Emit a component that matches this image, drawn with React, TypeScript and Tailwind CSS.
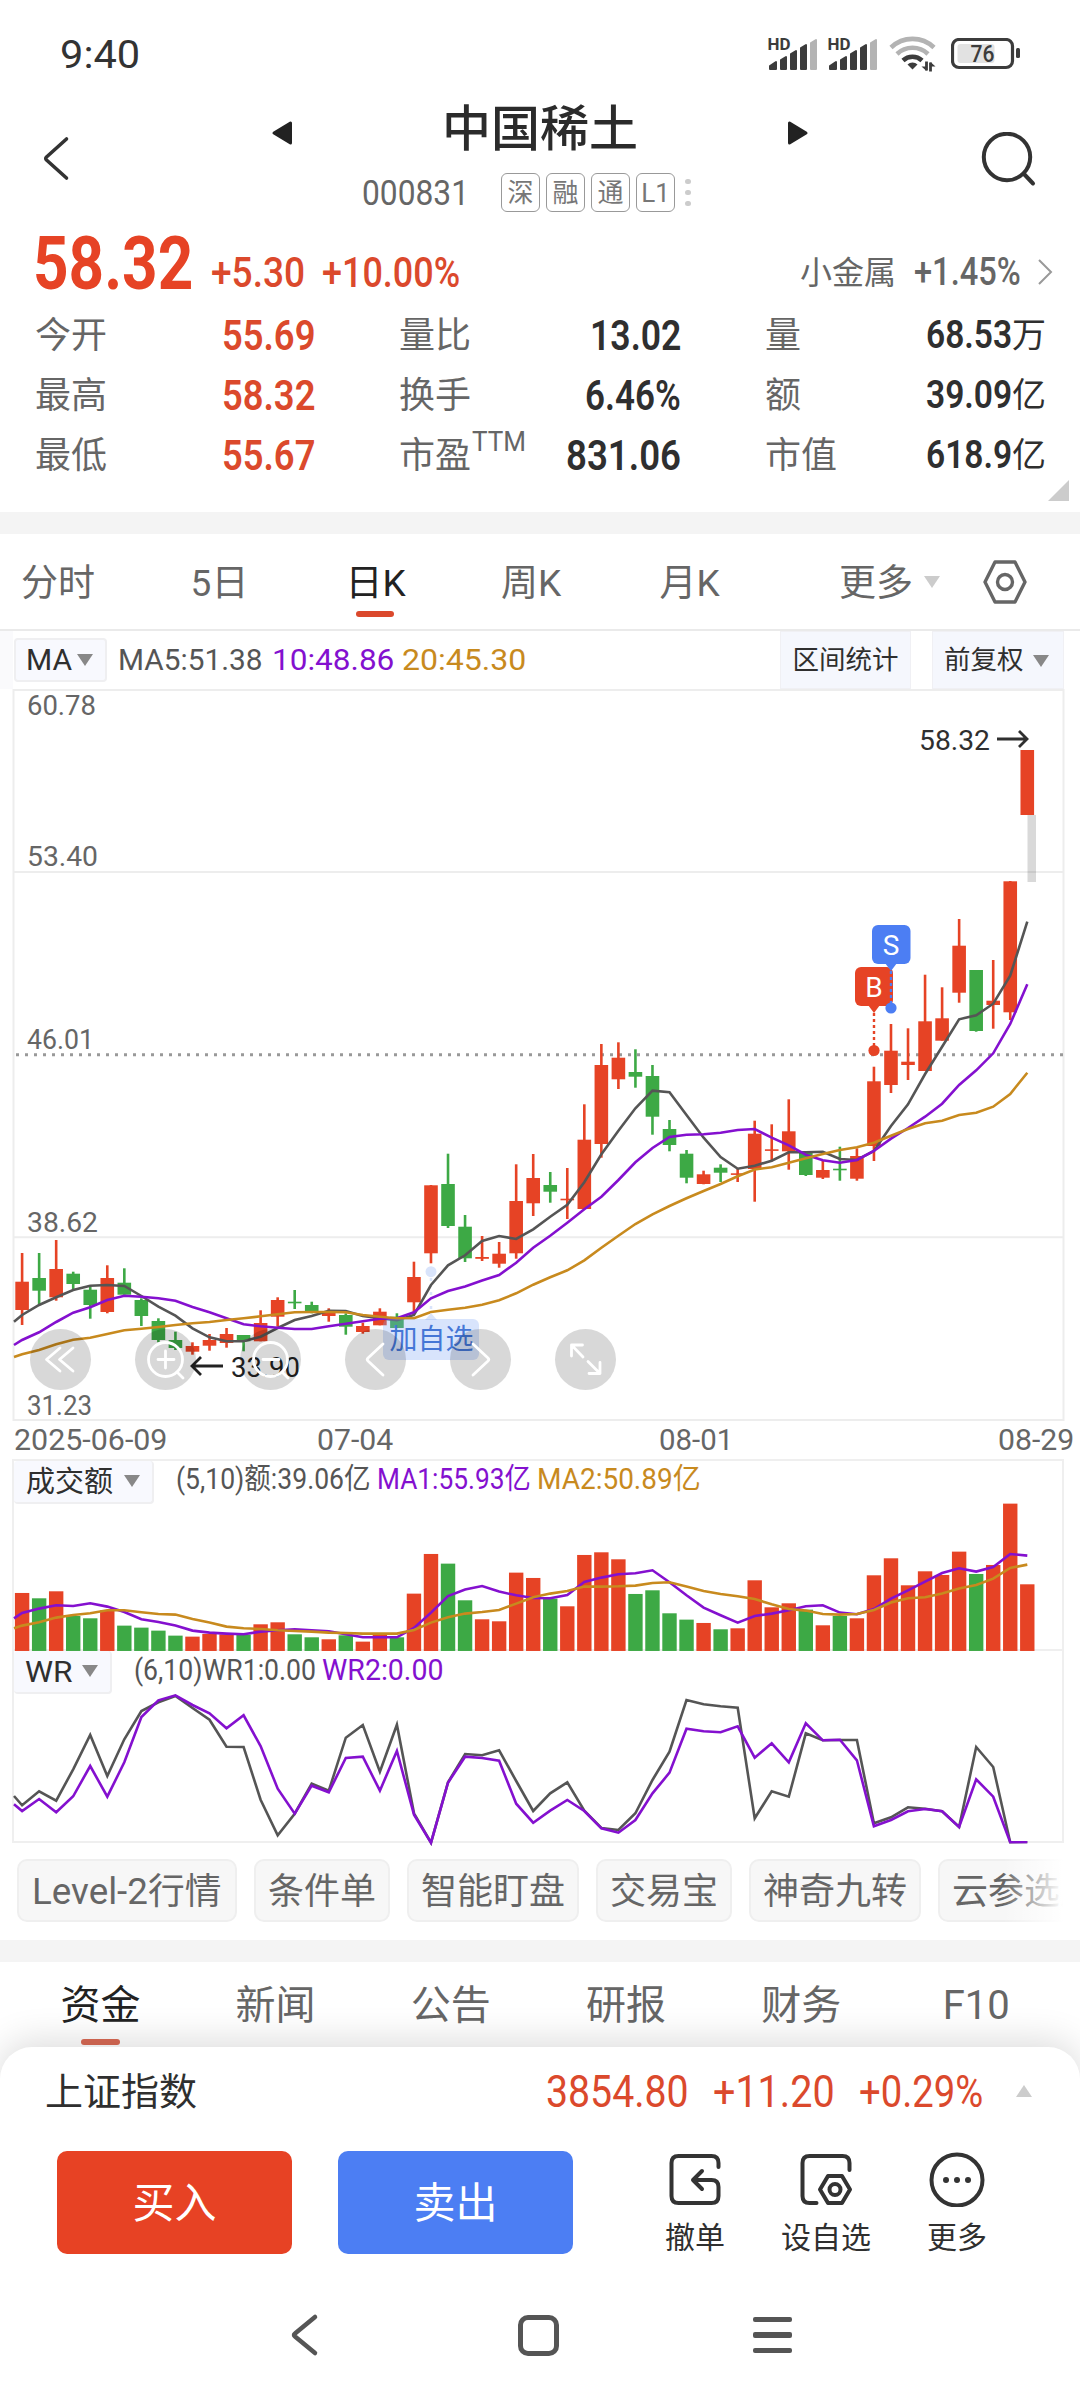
import { useLayoutEffect, useRef, useState, type ReactNode } from 'react'

const RED = '#e64325'
const GREEN = '#3da945'
const GRAY_LINE = '#555555'
const PURPLE = '#8410cf'
const GOLD = '#c88a1e'

const STEP = 17.037
const cx = (i: number) => 22.1 + STEP * i

// [rising, high, body top, body bottom, low]
const candles: [number, number, number, number, number][] = [
  [1, 1253, 1281.7, 1310, 1325], [0, 1253, 1278, 1290.7, 1304], [1, 1240, 1269, 1297.3, 1300.7],
  [0, 1271.7, 1273.7, 1284, 1289.3], [0, 1286.7, 1289.7, 1305, 1318.7], [1, 1265.3, 1278, 1312, 1313.3],
  [0, 1268.3, 1282.7, 1294.7, 1294.7], [0, 1298.3, 1300, 1316, 1326], [0, 1318.3, 1321, 1340, 1342.3],
  [0, 1331.7, 1340, 1348, 1350], [1, 1342.3, 1346, 1351.7, 1354.7], [1, 1334, 1340, 1345.7, 1350.7],
  [1, 1328, 1334, 1343, 1347.7], [0, 1335, 1335, 1341.3, 1351.3], [1, 1310.3, 1323, 1341.3, 1341.3],
  [1, 1297.3, 1300, 1316.7, 1326.7], [0, 1290, 1301.7, 1303.3, 1309], [0, 1301.7, 1305, 1312, 1313.3],
  [1, 1308.3, 1312.7, 1316, 1321.7], [0, 1313.3, 1315, 1326.7, 1334.7], [1, 1322.7, 1326, 1332, 1333.7],
  [1, 1308.3, 1311.7, 1325.3, 1325.3], [0, 1313.3, 1316.7, 1328, 1328], [1, 1261.7, 1277, 1302.3, 1313],
  [1, 1185, 1185.3, 1253.3, 1263.3], [0, 1153.7, 1184, 1226, 1228], [0, 1215, 1226.7, 1258.3, 1262],
  [1, 1236, 1257, 1258.8, 1261], [1, 1242, 1253.7, 1263.7, 1267.7], [1, 1164.3, 1201, 1253.3, 1258.7],
  [1, 1154, 1178, 1203.3, 1216], [0, 1172, 1185, 1191.7, 1202.7], [1, 1168, 1198.7, 1200.3, 1219],
  [1, 1104.3, 1139.7, 1209, 1209], [1, 1044, 1065, 1144, 1157.7], [1, 1042.3, 1057.7, 1079.3, 1089],
  [0, 1049.3, 1072, 1076.7, 1087.7], [0, 1065, 1076, 1116.7, 1134.7], [0, 1120, 1129, 1145, 1151.3],
  [0, 1150, 1153.7, 1177.7, 1183.3], [1, 1170.7, 1174.3, 1184, 1184.3], [0, 1164.3, 1167.7, 1172.7, 1182],
  [1, 1168.3, 1173.3, 1174.9, 1182], [1, 1120.7, 1133.7, 1169, 1201.7], [1, 1124.3, 1149.3, 1150.9, 1161.3],
  [1, 1099.3, 1131.3, 1151.3, 1169.7], [0, 1151, 1153, 1175, 1176], [1, 1160, 1170, 1177.7, 1179],
  [0, 1146.7, 1168.7, 1170.3, 1180.7], [1, 1148.3, 1156, 1178.7, 1180.7], [1, 1066.7, 1081.3, 1146, 1161],
  [1, 1024, 1050.7, 1085, 1093], [1, 1028.3, 1061.7, 1065, 1080], [1, 974.7, 1021.3, 1071, 1071],
  [1, 987.3, 1018.3, 1040.7, 1040.7], [1, 919, 945.7, 992.7, 1002.7], [0, 970, 970, 1031, 1031.7],
  [1, 960, 1000.7, 1005, 1028.7], [1, 881, 881.3, 1012.3, 1020], [1, 750, 750, 815, 815],
]

// every moving average starts with its value on the left frame line
const ma5 = [1321.7, 1315, 1305, 1297.3, 1290, 1285.7, 1285, 1286, 1296, 1306.7, 1315.7, 1328.3, 1337.3, 1341.3, 1341.3, 1336.7, 1328, 1320, 1316, 1310.7, 1311, 1316, 1318.3, 1320.3, 1315, 1285, 1265.3, 1255.3, 1241, 1236, 1239, 1229.3, 1216.7, 1204.7, 1182.3, 1154.3, 1130.7, 1108.3, 1090.7, 1092.3, 1115, 1137.7, 1157, 1168.7, 1165.7, 1160.7, 1152.3, 1152.3, 1151.7, 1159, 1160, 1151, 1126, 1104.3, 1074, 1046.7, 1019.3, 1015.3, 1003.7, 975.7, 921.7]
const ma10 = [1345, 1340, 1332.3, 1322, 1312.7, 1307.3, 1300, 1295.7, 1296.7, 1298.3, 1300.7, 1307, 1312.3, 1318.3, 1324.3, 1326.3, 1327.7, 1329, 1329, 1326.3, 1323.7, 1321.3, 1318.7, 1318.3, 1312.3, 1298.3, 1291, 1286.5, 1280.5, 1275, 1262.7, 1247.7, 1235.7, 1222.7, 1209.3, 1196.7, 1180, 1162.3, 1148, 1137, 1134.7, 1134.3, 1132.7, 1130, 1129, 1137.7, 1145.3, 1154.7, 1160.3, 1162.7, 1160, 1151, 1138.7, 1128, 1116.7, 1103.7, 1085, 1070.3, 1053.3, 1024, 984.3]
const ma20 = [1357, 1354.3, 1350, 1344.3, 1339.7, 1337.7, 1334, 1330.3, 1328.7, 1327, 1325, 1323.3, 1322, 1320, 1318.3, 1316.3, 1314.3, 1312.3, 1312, 1312, 1312.3, 1315, 1316.7, 1318.3, 1318.3, 1312, 1309.7, 1307.7, 1304.7, 1300.3, 1293.3, 1284.7, 1277.3, 1270.3, 1260.3, 1247.7, 1235.7, 1224, 1214.3, 1206, 1198.3, 1191, 1184, 1176.3, 1169.5, 1167.3, 1162.7, 1158.3, 1154, 1150, 1147.3, 1142.7, 1135.7, 1129, 1123.3, 1120.7, 1115, 1112.7, 1106.7, 1094, 1072.7]

// volume and WR panels, three units to a pixel
const volume = [518, 534, 513, 587, 594, 570, 616, 622, 631, 646, 649, 641, 642, 643, 612, 606, 642, 651, 657, 645, 664, 642, 651, 520, 401, 430, 540, 597, 603, 457, 473, 535, 558, 404, 396, 417, 521, 510, 579, 598, 608, 627, 624, 480, 561, 549, 568, 615, 587, 594, 465, 414, 495, 453, 464, 394, 461, 434, 250, 492]
const volMa1 = [594, 578, 565, 555, 557, 549, 559, 575, 597, 605, 616, 631, 637, 640, 642, 634, 630, 627, 630, 633, 642, 651, 651, 651, 623, 577, 527, 508, 497, 514, 525, 533, 534, 524, 485, 472, 462, 459, 450, 486, 525, 562, 585, 607, 587, 580, 570, 558, 555, 577, 582, 566, 535, 510, 484, 458, 444, 454, 440, 401, 406]
const volMa2 = [624, 616, 606, 592, 584, 579, 570, 570, 576, 581, 583, 596, 607, 619, 624, 626, 630, 632, 634, 637, 638, 640, 640, 640, 629, 607, 591, 580, 575, 569, 550, 531, 520, 512, 499, 499, 498, 496, 488, 486, 499, 512, 521, 528, 536, 552, 566, 571, 581, 583, 581, 569, 547, 534, 531, 520, 505, 494, 475, 443, 433]
const wr1 = [1128, 1156, 1114, 1142, 1048, 945, 1068, 958, 873, 847, 828, 864, 899, 980, 981, 1139, 1246, 1181, 1091, 1112, 953, 915, 1055, 914, 1180, 1268, 1087, 1002, 1006, 991, 1083, 1173, 1120, 1087, 1172, 1224, 1230, 1180, 1080, 995, 840, 853, 859, 863, 1195, 1114, 1130, 940, 961, 960, 960, 1210, 1192, 1162, 1166, 1174, 1221, 981, 1041, 1267, 1267]
const wr2 = [1153, 1173, 1137, 1177, 1129, 1038, 1130, 1027, 891, 841, 826, 855, 880, 925, 886, 978, 1106, 1181, 1097, 1117, 1014, 1010, 1112, 993, 1184, 1268, 1088, 1010, 1014, 1022, 1151, 1208, 1172, 1140, 1173, 1225, 1238, 1200, 1120, 1058, 926, 934, 937, 919, 1013, 970, 1027, 910, 961, 959, 1021, 1219, 1200, 1174, 1167, 1174, 1221, 1078, 1130, 1267, 1267]

const toPoints = (ys: number[], unit = 1) =>
  ys.map((y, i) => `${i === 0 ? 14 : cx(i - 1).toFixed(1)},${(y / unit).toFixed(1)}`).join(' ')

function Line({ ys, color, unit }: { ys: number[]; color: string; unit?: number }) {
  return <polyline points={toPoints(ys, unit)} fill="none" stroke={color} strokeWidth="2.600" />
}

/* Squeezes a run of text to a fixed width */
function Fit({ w, className = '', children }: { w: number; className?: string; children: ReactNode }) {
  const ref = useRef<HTMLSpanElement>(null)
  const [scale, setScale] = useState(1)

  useLayoutEffect(() => {
    if (ref.current) setScale(w / ref.current.offsetWidth)
  }, [w])

  return (
    <span className={`inline-block shrink-0 whitespace-nowrap leading-none ${className}`} style={{ width: w }}>
      <span ref={ref} className="inline-block origin-left" style={{ transform: `scaleX(${scale})` }}>
        {children}
      </span>
    </span>
  )
}

function Signal() {
  return (
    <svg width="52" height="40" viewBox="0 -4 52 40">
      <text x="0.500" y="14" fontSize="16" fontWeight="700" fill="#3c3c3c" textLength="23" lengthAdjust="spacingAndGlyphs">HD</text>
      <path d="M3 33v-3l6-4v7z M14 33v-9l5-3v12z M24 33v-15l5-3v18z M34 33v-21l5-3v24z" fill="#3c3c3c" stroke="#3c3c3c" strokeWidth="2" strokeLinejoin="round" />
      <path d="M44 33v-26l5-3v29z" fill="#b3b3b3" stroke="#b3b3b3" strokeWidth="2" strokeLinejoin="round" />
    </svg>
  )
}

function StatusBar() {
  return (
    <div className="flex h-24 items-center pt-3 pl-[60px]">
      <Fit w={80} className="mt-0.5 text-[39px] text-[#333]">9:40</Fit>
      <div className="ml-[627px] flex items-center">
        <div className="-mt-1"><Signal /></div>
        <div className="-mt-1 ml-2"><Signal /></div>
        <svg className="ml-2.5" width="48" height="38" viewBox="0 0 48 38" fill="none" strokeWidth="4.600">
          <path d="M2 12.500a31 31 0 0 1 43 0" stroke="#b3b3b3" />
          <path d="M8 19a22.500 22.500 0 0 1 31 0" stroke="#b3b3b3" />
          <path d="M14 25.500a14 14 0 0 1 19 0" stroke="#3c3c3c" />
          <path d="M23.500 34.500l-5-5a7 7 0 0 1 10 0z" fill="#3c3c3c" />
          <path d="M37.500 26.500v9M41.500 36.500v-9" stroke="#3c3c3c" strokeWidth="2.800" />
          <path d="M37.500 36l-5-4.500h5zM41.500 27l5 4.500h-5z" fill="#3c3c3c" />
        </svg>
        <svg className="ml-[14px]" width="70" height="32" viewBox="0 0 70 32">
          <rect x="1.500" y="1.500" width="60" height="28" rx="6.500" fill="none" stroke="#3c3c3c" strokeWidth="3.200" />
          <rect x="6.500" y="6" width="37" height="19" rx="3" fill="#e2e2e2" />
          <rect x="65" y="10" width="4" height="10" rx="1.500" fill="#3c3c3c" />
          <text x="19.500" y="24" fontSize="23.500" fontWeight="500" fill="#3c3c3c" textLength="24" lengthAdjust="spacingAndGlyphs">76</text>
        </svg>
      </div>
    </div>
  )
}

function Header() {
  return (
    <div className="flex h-32 items-center">
      <div className="w-[271px] pl-[41px]">
        <svg width="30" height="50" viewBox="0 0 30 50" fill="none" stroke="#333" strokeWidth="3.600" strokeLinecap="round" strokeLinejoin="round">
          <path d="M25.500 4L5.500 22q-1.500 1.500 0 3L25.500 43" />
        </svg>
      </div>
      <div className="w-[538px]">
        <div className="flex h-16 items-center justify-between">
          <svg className="mt-2.5" width="22" height="26" viewBox="0 0 22 26" fill="#222" stroke="#222" strokeWidth="3" strokeLinejoin="round">
            <path d="M19.500 3v20L3 13z" />
          </svg>
          <span className="mt-[3px] text-[49px] leading-none font-medium text-[#2b2b2b]">中国稀土</span>
          <svg className="mt-2.5" width="22" height="26" viewBox="0 0 22 26" fill="#222" stroke="#222" strokeWidth="3" strokeLinejoin="round">
            <path d="M2.500 3v20L19 13z" />
          </svg>
        </div>
        <div className="flex h-16 items-center pl-[91px]">
          <Fit w={107} className="mt-0.5 text-[35px] text-[#666]">000831</Fit>
          <div className="ml-8 flex gap-1.5">
            {['深', '融', '通', 'L1'].map((tag) => (
              <span key={tag} className="flex h-[39px] w-[39px] items-center justify-center rounded-md border border-[#999] pt-0.5 text-[26px] leading-none text-[#777]">
                {tag}
              </span>
            ))}
          </div>
          <div className="ml-2.5 flex flex-col gap-1.5">
            <i className="h-[5px] w-[6px] rounded-full bg-[#ccc]" />
            <i className="h-[5px] w-[6px] rounded-full bg-[#ccc]" />
            <i className="h-[5px] w-[6px] rounded-full bg-[#ccc]" />
          </div>
        </div>
      </div>
      <svg className="ml-[172px]" width="56" height="56" viewBox="0 0 56 56" fill="none" stroke="#333" strokeWidth="4" strokeLinecap="round">
        <circle cx="26" cy="25" r="23.200" />
        <path d="M43 42l9 9.500" />
      </svg>
    </div>
  )
}

const stats = [
  ['今开', '55.69', 93], ['量比', '13.02', 91], ['量', '68.53', 86, '万'],
  ['最高', '58.32', 93], ['换手', '6.46%', 96], ['额', '39.09', 86, '亿'],
  ['最低', '55.67', 93], ['市盈', '831.06', 115], ['市值', '618.9', 86, '亿'],
] as [string, string, number, string?][]

function Quote() {
  return (
    <div className="relative h-[288px]">
      <div className="flex h-20 items-baseline pt-[3px] pl-[33px]">
        <Fit w={160} className="text-[74px] font-bold text-[#e64325]">58.32</Fit>
        <Fit w={94} className="ml-[18px] -translate-y-0.5 text-[43px] font-medium text-[#db492c]">+5.30</Fit>
        <Fit w={138} className="ml-[17px] -translate-y-0.5 text-[43px] font-medium text-[#db492c]">+10.00%</Fit>
        <div className="mt-[25px] ml-[340px] flex h-10 items-center self-start text-[#666]">
          <span className="mt-0.5 text-[32px] leading-none">小金属</span>
          <Fit w={107} className="ml-[18px] text-[39px] font-medium">+1.45%</Fit>
          <svg className="ml-4" width="16" height="26" viewBox="0 0 16 26" fill="none" stroke="#999" strokeWidth="2">
            <path d="M2 1l12 12L2 25" />
          </svg>
        </div>
      </div>
      <div className="grid grid-cols-[280px_282px_281px] gap-x-[84px] pt-px pl-[35px]">
        {stats.map(([label, value, w, unit], i) => (
          <div key={label} className="flex h-[60px] items-center justify-between">
            <span className="flex pt-0.5 text-[36px] leading-none text-[#666]">
              {label}
              {label === '市盈' && <Fit w={54} className="-mt-2.5 ml-px text-[28px]">TTM</Fit>}
            </span>
            <span className={i % 3 === 0 ? 'flex text-[#db492c]' : 'flex text-[#2f2f2f]'}>
              <Fit w={w} className={unit ? 'text-[39px] font-semibold' : 'text-[43px] font-semibold'}>{value}</Fit>
              {unit && <span className="pt-0.5 text-[34px] leading-none">{unit}</span>}
            </span>
          </div>
        ))}
      </div>
      <svg className="absolute top-[256px] left-[1048px]" width="21" height="21" viewBox="0 0 21 21">
        <path d="M21 0v21H0z" fill="#ccc" />
      </svg>
    </div>
  )
}

function Caret({ className = '', color = '#888' }: { className?: string; color?: string }) {
  return (
    <svg className={className} width="16" height="12" viewBox="0 0 16 12">
      <path d="M0 0h16l-8 12z" fill={color} />
    </svg>
  )
}

function PeriodTabs() {
  const item = 'flex items-center justify-center pt-[3px] leading-none'
  return (
    <div className="grid h-[97px] grid-cols-[116px_207px_105px_206px_111px_168px_auto] border-b-2 border-[#eaeaea] text-[37px] text-[#666]">
      <span className={item}>分时</span>
      <span className={item}>5日</span>
      <span className="relative flex items-center justify-center pt-[3px] leading-none text-[#222]">
        日K
        <i className="absolute top-[77px] left-[33px] h-1.5 w-[38px] rounded-[3px] bg-[#db492c]" />
      </span>
      <span className={item}>周K</span>
      <span className={item}>月K</span>
      <span className="flex items-center justify-end pt-[3px] leading-none">更多</span>
      <span className="flex items-center">
        <Caret className="ml-[11px]" color="#ccc" />
        <svg className="ml-[43px]" width="44" height="44" viewBox="0 0 44 44" fill="none" stroke="#666" strokeWidth="3.400" strokeLinejoin="round">
          <path d="M12 2h20l10 20-10 20H12L2 22z" />
          <circle cx="22" cy="22" r="7.500" />
        </svg>
      </span>
    </div>
  )
}

function MaBar() {
  return (
    <div className="flex h-[58px] text-[#2f2f2f]">
      <div className="h-full w-[13px] bg-[#fafafc]" />
      <div className="mt-[7px] ml-px flex h-[44px] w-[93px] items-center rounded-sm border-2 border-[#efeff1] bg-[#f8f9fe] pl-2.5">
        <Fit w={46} className="text-[30px]">MA</Fit>
        <Caret className="ml-[5px]" />
      </div>
      <div className="ml-[11px] flex items-center text-[30px]">
        <Fit w={145} className="text-[#555]">MA5:51.38</Fit>
        <Fit w={122} className="ml-[9px] text-[#8410cf]">10:48.86</Fit>
        <Fit w={124} className="ml-[8px] text-[#c88a1e]">20:45.30</Fit>
      </div>
      <div className="ml-auto flex h-full w-[131px] items-center justify-center border border-[#f0f0f4] bg-[#f5f7fd] pt-px text-[26.500px] leading-none">
        区间统计
      </div>
      <div className="mr-[16px] ml-[21px] flex h-full w-[132px] items-center border border-[#f0f0f4] bg-[#f5f7fd] pt-px pl-[11px] text-[26.500px] leading-none">
        前复权
        <Caret className="ml-[9px]" />
      </div>
    </div>
  )
}

function ChartText({ x, y, w, color = '#666', children }: { x: number; y: number; w: number; color?: string; children: string }) {
  return (
    <text x={x} y={y} fontSize="28.500" fill={color} textLength={w} lengthAdjust="spacingAndGlyphs">{children}</text>
  )
}

function PriceChart() {
  return (
    <svg className="block" width="1080" height="732" viewBox="0 689 1080 732">
      <g stroke="#ededed" strokeWidth="2" fill="none">
        <rect x="13.500" y="690" width="1050" height="730" />
        <path d="M14 872H1063M14 1237.300H1063" />
      </g>
      <path d="M16 1054.700H1063" stroke="#999" strokeWidth="3" strokeDasharray="3 6" />

      {candles.map(([up, high, top, bottom, low], i) => (
        <g key={i} fill={up ? RED : GREEN}>
          <rect x={cx(i) - 1.3} y={high} width="2.600" height={low - high} />
          <rect x={cx(i) - 6.8} y={top} width="13.600" height={bottom - top} />
        </g>
      ))}
      <rect x="1027.500" y="815" width="8.500" height="67" fill="#000" opacity=".15" />

      <Line ys={ma5} color={GRAY_LINE} />
      <Line ys={ma10} color={PURPLE} />
      <Line ys={ma20} color={GOLD} />

      <ChartText x={27} y={715} w={69}>60.78</ChartText>
      <ChartText x={27} y={866} w={71}>53.40</ChartText>
      <ChartText x={27} y={1049} w={67}>46.01</ChartText>
      <ChartText x={27} y={1232} w={71}>38.62</ChartText>
      <ChartText x={27} y={1415} w={65}>31.23</ChartText>

      <ChartText x={919} y={750} w={71} color="#2f2f2f">58.32</ChartText>
      <path d="M997 739h30M1019 731l8 8-8 8" fill="none" stroke="#2f2f2f" strokeWidth="2.800" />

      {/* buy and sell pins */}
      <g fill={RED}>
        <rect x="855" y="967" width="38" height="39" rx="6" />
        <path d="M868 1005h12l-6 8z" />
        <circle cx="874" cy="1050.500" r="5.600" />
        <path d="M874 1013v34" stroke={RED} strokeWidth="2.400" strokeDasharray="3 3" />
        <text x="874" y="997" fontSize="28" fill="#fff" textAnchor="middle">B</text>
      </g>
      <g fill="#4c7ef3">
        <rect x="872" y="925" width="38.500" height="39" rx="6" />
        <path d="M885 963h12l-6 8z" />
        <circle cx="891" cy="1008" r="5.600" />
        <path d="M891 971v34" stroke="#4c7ef3" strokeWidth="2.400" strokeDasharray="3 3" />
        <text x="891" y="955" fontSize="28" fill="#fff" textAnchor="middle">S</text>
      </g>

      <g fill="#d9e4fb">
        <circle cx="431" cy="1271.700" r="5.500" />
        <path d="M431 1278v36" stroke="#d9e4fb" strokeWidth="2.500" strokeDasharray="3 11" />
        <path d="M425 1320l6-7 6 7z" />
      </g>
      <rect x="383" y="1319" width="96" height="41" rx="6" fill="#7ea4f5" opacity=".3" />
      <text x="389.500" y="1349" fontSize="28" fill="#4576d6">加自选</text>

      <path d="M223 1366h-30M201 1357l-9 9 9 9" fill="none" stroke="#222" strokeWidth="2.800" />
      <ChartText x={231} y={1376.500} w={69} color="#222">33.90</ChartText>

      <g fill="#000" opacity=".15">
        {[60.5, 165.5, 270.5, 375.5, 480.5, 585.5].map((x) => (
          <circle key={x} cx={x} cy="1359.500" r="30.500" />
        ))}
      </g>
      <g fill="none" stroke="#fff" strokeWidth="2.800" strokeLinecap="round" strokeLinejoin="round">
        <path d="M60 1348l-13.500 11.500L60 1371M73 1348l-13.500 11.500L73 1371" />
        <circle cx="165.500" cy="1359.500" r="17" />
        <path d="M158 1359.500h16M165.500 1351v17M177 1372l6 6" />
        <circle cx="270.500" cy="1359.500" r="17" />
        <path d="M263 1359.500h16M282 1372l6 6" />
        <path d="M383 1344l-15 14q-1.500 1.500 0 3l15 14" />
        <path d="M473 1344l15 14q1.500 1.500 0 3l-15 14" />
        <path d="M571.500 1356v-11h11M571.500 1345l11.500 12M600 1362.500v11h-11M600 1373.500l-12-12" />
      </g>
    </svg>
  )
}

function DateAxis() {
  return (
    <div className="flex h-[38px] items-center text-[29px] text-[#666]">
      <Fit w={153} className="ml-[14px]">2025-06-09</Fit>
      <Fit w={76} className="ml-[150px]">07-04</Fit>
      <Fit w={74} className="ml-[266px]">08-01</Fit>
      <Fit w={76} className="ml-[265px]">08-29</Fit>
    </div>
  )
}

function VolumePanel() {
  return (
    <div className="mr-4 ml-3 h-[192px] border-2 border-[#efefef]">
      <div className="flex h-[43px] items-start text-[29px] leading-none">
        <div className="flex h-[43px] w-[140px] items-center rounded-sm border-r-2 border-b-2 border-[#efeff1] bg-[#f8f9fe] pt-0.5 pl-[12px] text-[#2f2f2f]">
          成交额
          <Caret className="-mt-1 ml-[11px]" />
        </div>
        <div className="ml-[22px] flex h-[37px] items-center">
          <Fit w={195} className="text-[#555]">(5,10)额:39.06亿</Fit>
          <Fit w={154} className="ml-[6px] text-[#8410cf]">MA1:55.93亿</Fit>
          <Fit w={164} className="ml-[6px] text-[#c88a1e]">MA2:50.89亿</Fit>
        </div>
      </div>
      <svg className="block" width="1048" height="147" viewBox="14 83.700 1048 147" overflow="visible">
        {volume.map((v, i) => (
          <rect key={i} x={cx(i) - 7.2} y={v / 3} width="14.400" height={(692 - v) / 3} fill={candles[i][0] ? RED : GREEN} />
        ))}
        <Line ys={volMa1} color={PURPLE} unit={3} />
        <Line ys={volMa2} color={GOLD} unit={3} />
      </svg>
    </div>
  )
}

function WrPanel() {
  return (
    <div className="mr-4 ml-3 h-[192px] border-x-2 border-b-2 border-[#efefef]">
      <div className="flex h-[43px] items-start text-[29px]">
        <div className="flex h-[43px] w-[98px] items-center rounded-sm border-r-2 border-b-2 border-[#efeff1] bg-[#f8f9fe] pt-0.5 pl-[11px] text-[#2f2f2f]">
          <Fit w={48}>WR</Fit>
          <Caret className="-mt-1 ml-[9px]" />
        </div>
        <div className="ml-[22px] flex h-[39px] items-center">
          <Fit w={182} className="text-[#555]">(6,10)WR1:0.00</Fit>
          <Fit w={121} className="ml-[6px] text-[#8410cf]">WR2:0.00</Fit>
        </div>
      </div>
      <svg className="block" width="1048" height="149" viewBox="14 274 1048 149" overflow="visible">
        <Line ys={wr1} color={GRAY_LINE} unit={3} />
        <Line ys={wr2} color={PURPLE} unit={3} />
      </svg>
    </div>
  )
}

function Chips() {
  const chip = 'flex h-[63px] shrink-0 items-center justify-center rounded-[10px] border-2 border-[#efefef] bg-[#f7f7f7] pt-[3px] text-[36px] leading-none text-[#666]'
  return (
    <div className="relative mr-[17px] flex h-[97px] gap-[17px] overflow-hidden pt-4 pl-[17px]">
      <span className={`${chip} w-[220px]`}><Fit w={190}>Level-2行情</Fit></span>
      <span className={`${chip} w-[136px]`}>条件单</span>
      <span className={`${chip} w-[172px]`}>智能盯盘</span>
      <span className={`${chip} w-[136px]`}>交易宝</span>
      <span className={`${chip} w-[172px]`}>神奇九转</span>
      <span className={`${chip} w-[172px]`}>云参选股</span>
      <i className="absolute top-0 right-0 h-full w-[60px] bg-gradient-to-r from-white/0 to-white" />
    </div>
  )
}

function InfoTabs() {
  return (
    <div className="flex h-[85px] pl-[13px] text-[40px] leading-none text-[#666]">
      <span className="relative w-[175px] pt-6 text-center text-[#222]">
        资金
        <i className="absolute top-[77px] left-[68px] h-1.5 w-[39px] rounded-[3px] bg-[#d96a55]" />
      </span>
      {['新闻', '公告', '研报', '财务'].map((t) => (
        <span key={t} className="w-[175.200px] pt-6 text-center">{t}</span>
      ))}
      <span className="w-[175px] pt-6 text-center"><Fit w={67}>F10</Fit></span>
    </div>
  )
}

function Action({ label, children }: { label: string; children: ReactNode }) {
  return (
    <div className="flex flex-col items-center">
      <svg width="56" height="56" viewBox="0 0 56 56" fill="none" stroke="#333" strokeWidth="4" strokeLinecap="round" strokeLinejoin="round">
        {children}
      </svg>
      <span className="mt-4 text-[30px] leading-none text-[#2f2f2f]">{label}</span>
    </div>
  )
}

function TradeCard() {
  return (
    <div className="relative h-[207px] rounded-t-[32px] bg-white shadow-[0_-6px_36px_rgba(0,0,0,0.14)]">
      <div className="flex h-[88px] items-center pl-[45px]">
        <span className="pt-0.5 text-[38px] leading-none text-[#2f2f2f]">上证指数</span>
        <div className="ml-[349px] flex text-[45px] text-[#db492c]">
          <Fit w={143}>3854.80</Fit>
          <Fit w={122} className="ml-[24px]">+11.20</Fit>
          <Fit w={124} className="ml-[24px]">+0.29%</Fit>
        </div>
        <Caret className="ml-[31px] w-5 rotate-180" color="#ccc" />
      </div>
      <div className="flex pt-4 pl-[57px]">
        <div className="flex h-[103px] w-[235px] items-center justify-center rounded-[10px] bg-[#e74224] pt-0.5 text-[42px] leading-none text-white">买入</div>
        <div className="ml-[46px] flex h-[103px] w-[235px] items-center justify-center rounded-[10px] bg-[#4c7ef3] pt-0.5 text-[42px] leading-none text-white">卖出</div>
        <div className="ml-[92px] flex gap-[56px]">
          <Action label="撤单">
            <path d="M51.500 16v-4q0-7-7-7h-33q-7 0-7 7v33q0 7 7 7h33q7 0 7-7v-9q0-7-7-7H26M35 20l-9 9 9 9" />
          </Action>
          <Action label="设自选">
            <path d="M51.500 19v-7q0-7-7-7h-33q-7 0-7 7v33q0 7 7 7h7" />
            <path d="M30 25h14l8 13.500-8 13.500H30l-8-13.500z" />
            <circle cx="37" cy="38.500" r="5.500" />
          </Action>
          <Action label="更多">
            <circle cx="28" cy="29" r="25.500" />
            <path d="M17 29h.01M28 29h.01M39 29h.01" strokeWidth="6" />
          </Action>
        </div>
      </div>
    </div>
  )
}

function SystemNav() {
  return (
    <div className="relative flex h-[146px] items-center bg-white pt-4 pl-[289px]">
      <svg width="30" height="46" viewBox="0 0 30 46" fill="none" stroke="#555" strokeWidth="4.500" strokeLinecap="round" strokeLinejoin="round">
        <path d="M26 5L6 21.500q-2 1.500 0 3L26 41" />
      </svg>
      <i className="ml-[199px] h-[41px] w-[41px] rounded-[10px] border-[5px] border-[#555]" />
      <div className="ml-[194px] flex flex-col gap-2.5">
        <i className="h-[5.500px] w-[39px] rounded-[2px] bg-[#555]" />
        <i className="h-[5.500px] w-[39px] rounded-[2px] bg-[#555]" />
        <i className="h-[5.500px] w-[39px] rounded-[2px] bg-[#555]" />
      </div>
    </div>
  )
}

export default function App() {
  return (
    <div className="h-[2400px] w-[1080px] overflow-hidden bg-white font-['Roboto','Noto_Sans_CJK_SC',sans-serif]">
      <StatusBar />
      <Header />
      <Quote />
      <div className="h-[22px] bg-[#f4f4f4]" />
      <PeriodTabs />
      <MaBar />
      <PriceChart />
      <DateAxis />
      <VolumePanel />
      <WrPanel />
      <Chips />
      <div className="h-[22px] bg-[#f4f4f4]" />
      <InfoTabs />
      <TradeCard />
      <SystemNav />
    </div>
  )
}
